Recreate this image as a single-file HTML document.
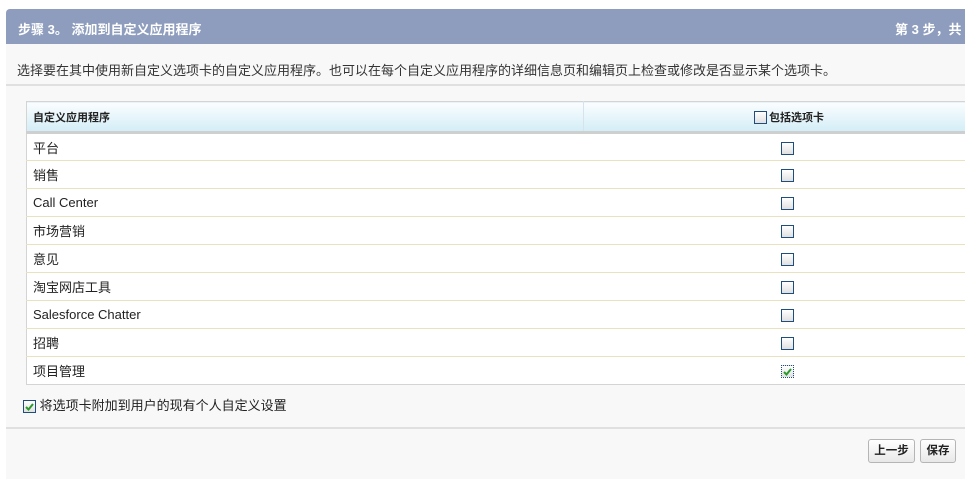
<!DOCTYPE html>
<html><head><meta charset="utf-8"><style>
*{margin:0;padding:0;box-sizing:border-box}
body{width:965px;height:470px;background:#fff;font-family:"Liberation Sans","Noto Sans CJK SC",sans-serif;font-size:12px;color:#222;position:relative;overflow:hidden}
.panel{position:absolute;left:6px;top:9px;width:970px;height:470px;background:#f8f8f8;border-radius:4px 0 0 0}
.hdr{position:absolute;left:0;top:0;width:100%;height:35px;background:#8e9dbd;border-radius:4px 0 0 0;color:#fff;font-weight:bold;font-size:13px}
.hdr .l{position:absolute;left:12px;top:10px}
.hdr .r{position:absolute;left:889px;top:10px;white-space:nowrap}
.desc{position:absolute;left:11px;top:51px;font-size:13px;color:#333}
.sep{position:absolute;left:0;width:100%;height:2px;background:#e0e0e0}
table{position:absolute;left:20px;top:92px;width:950px;border-collapse:collapse;background:#fff;border:1px solid #d4d4d4}
th{height:31px;background:linear-gradient(#fbfdfe,#d3edf7);border-bottom:3px solid #cfcfcf;font-size:11px;font-weight:bold;text-align:left;padding-left:6px}
th.c{text-align:left;padding-left:170px;border-left:1px solid #d7e3ea}
td{height:28px;border-bottom:1px solid #e8e2bf;padding-left:6px;font-size:13px}
td.c{padding-left:197px}
tr:last-child td{border-bottom:none}
.cb{display:inline-block;width:13px;height:13px;border:1px solid #1f4e7c;background:linear-gradient(#fff,#e0e0e0);vertical-align:middle;position:relative}
.btn{position:absolute;top:430px;height:24px;border:1px solid #b5b5b5;border-radius:3px;background:linear-gradient(#fff,#e8e8e8);font-weight:bold;font-size:11.5px;text-align:center;line-height:22px}
</style></head><body>
<div class="panel">
<div class="hdr"><span class="l">步骤 3。 添加到自定义应用程序</span><span class="r">第 3 步，共</span></div>
<div class="desc">选择要在其中使用新自定义选项卡的自定义应用程序。也可以在每个自定义应用程序的详细信息页和编辑页上检查或修改是否显示某个选项卡。</div>
<div class="sep" style="top:75px"></div>
<table>
<tr><th style="width:557px">自定义应用程序</th><th class="c"><span class="cb" style="margin-right:2px"></span>包括选项卡</th></tr>
<tr><td>平台</td><td class="c"><span class="cb"></span></td></tr>
<tr><td>销售</td><td class="c"><span class="cb"></span></td></tr>
<tr><td>Call Center</td><td class="c"><span class="cb"></span></td></tr>
<tr><td>市场营销</td><td class="c"><span class="cb"></span></td></tr>
<tr><td>意见</td><td class="c"><span class="cb"></span></td></tr>
<tr><td>淘宝网店工具</td><td class="c"><span class="cb"></span></td></tr>
<tr><td>Salesforce Chatter</td><td class="c"><span class="cb"></span></td></tr>
<tr><td>招聘</td><td class="c"><span class="cb"></span></td></tr>
<tr><td>项目管理</td><td class="c"><span class="cb" style="border:1px dotted #1f4e7c"><svg width="11" height="11" style="position:absolute;left:0;top:0"><path d="M2 6 L4.5 8.5 L9 3" stroke="#2a9a2a" stroke-width="2" fill="none"/></svg></span></td></tr>
</table>
<div style="position:absolute;left:17px;top:386px;font-size:13px"><span class="cb" style="position:relative"><svg width="11" height="11" style="position:absolute;left:0;top:0"><path d="M2 6 L4.5 8.5 L9 3" stroke="#2a9a2a" stroke-width="2" fill="none"/></svg></span> 将选项卡附加到用户的现有个人自定义设置</div>
<div class="sep" style="top:418px"></div>
<div class="btn" style="left:862px;width:47px">上一步</div>
<div class="btn" style="left:914px;width:36px">保存</div>
</div>
</body></html>
